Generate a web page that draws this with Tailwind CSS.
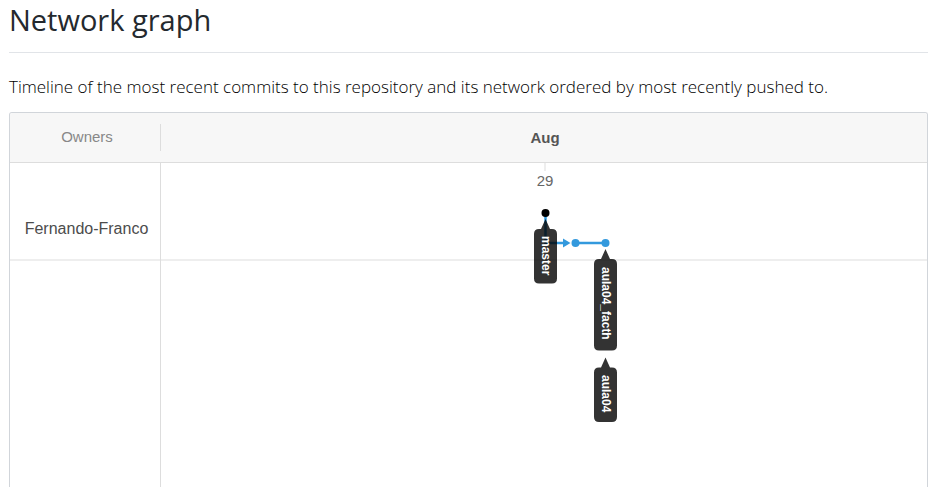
<!DOCTYPE html>
<html lang="en">
<head>
<meta charset="utf-8">
<meta name="viewport" content="width=device-width, initial-scale=1">
<title>Network graph</title>
<script src="https://cdn.jsdelivr.net/npm/@tailwindcss/browser@4"></script>
</head>
<body class="flex h-screen flex-col overflow-hidden bg-white pr-3.5 pl-[9px] font-['Open_Sans',sans-serif] text-[#24292e]">
  <header class="border-b border-[#e1e4e8] pb-3">
    <h1 class="text-[29px] leading-10 font-normal">Network graph</h1>
  </header>
  <p class="pt-5 pb-[11px] text-[17px] leading-7 font-light whitespace-nowrap text-black">Timeline of the most recent commits to this repository and its network ordered by most recently pushed to.</p>

  <main class="flex flex-1 flex-col rounded-t-[3px] border border-b-0 border-[#d1d5da] font-['Liberation_Sans',Arial,sans-serif] text-base text-[#4c4c4c]">
    <div class="flex h-[50px] items-center rounded-t-[2px] border-b border-[#ddd] bg-[#f7f7f7]">
      <div class="flex h-[27px] w-[151px] items-center justify-center border-r border-[#ddd] pl-1 text-[15px] text-[#888]">Owners</div>
      <div class="flex-1 pt-0.5 pl-0.5 text-center text-[15px] font-bold text-[#555]">Aug</div>
    </div>

    <div class="relative flex flex-1 flex-col">
      <div class="flex h-[98px] border-b-2 border-[#eee]">
        <div class="flex w-[151px] items-end justify-center pb-5 pl-0.5 text-base leading-5 whitespace-nowrap">Fernando-Franco</div>
        <div class="flex flex-1 flex-col items-center pl-0.5">
          <div class="h-2 w-0.5 bg-[#eee]"></div>
          <div class="text-[15px] leading-5 text-[#666]">29</div>
        </div>
      </div>

      <div class="pointer-events-none absolute inset-0 flex">
        <div class="w-[151px] border-r border-[#ddd]"></div>
        <div class="flex flex-1 justify-center pl-0.5">
          <svg width="160" height="270" viewBox="0 0 160 270" role="img" aria-label="Commits on master, aula04_facth and aula04" class="shrink-0">
            <g fill="none" stroke="#3399dd" stroke-width="2.5">
              <path d="M80.5 50V80H99"/>
              <path d="M110.500 80H140.500"/>
            </g>
            <path d="M98 75.500L105.500 80L98 84.500Z" fill="#3399dd"/>
            <circle cx="110.500" cy="80" r="4" fill="#3399dd"/>
            <circle cx="140.500" cy="80" r="4" fill="#3399dd"/>
            <circle cx="80.500" cy="50" r="4" fill="#000"/>
            <g fill="#000" fill-opacity=".8">
              <path d="M80.500 56L85 66H87Q92 66 92 71V115.500Q92 120.500 87 120.500H74Q69 120.500 69 115.500V71Q69 66 74 66H76Z"/>
              <path d="M140.500 86L145 96H147Q152 96 152 101V182.500Q152 187.500 147 187.500H134Q129 187.500 129 182.500V101Q129 96 134 96H136Z"/>
              <path d="M140.500 194.500L145 204.500H147Q152 204.500 152 209.500V254Q152 259 147 259H134Q129 259 129 254V209.500Q129 204.500 134 204.500H136Z"/>
            </g>
            <g fill="#fff" font-family="'Liberation Sans', Arial, sans-serif" font-size="12" font-weight="700">
              <text transform="translate(77 73) rotate(90)">master</text>
              <text transform="translate(137 104) rotate(90)">aula04_facth</text>
              <text transform="translate(137 212) rotate(90)">aula04</text>
            </g>
          </svg>
        </div>
      </div>
    </div>
  </main>
</body>
</html>
